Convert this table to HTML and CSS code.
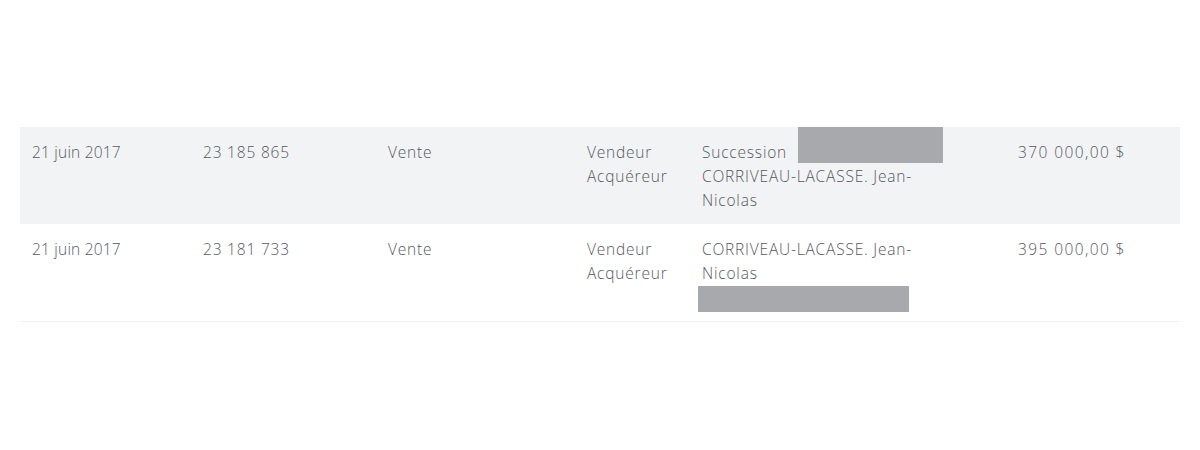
FILE: index.html
```html
<!DOCTYPE html>
<html lang="fr">
<head>
<meta charset="utf-8">
<title>Transactions</title>
<link rel="stylesheet" href="styles.css">
</head>
<body>
<div class="page">
  <table class="tx">
    <colgroup>
      <col class="c-date"><col class="c-num"><col class="c-type"><col class="c-role"><col class="c-name"><col class="c-amt">
    </colgroup>
    <tbody>
      <tr class="odd">
        <td class="date">21 juin 2017</td>
        <td>23 185 865</td>
        <td>Vente</td>
        <td><div>Vendeur</div><div>Acquéreur</div></td>
        <td>
          <div class="party">Succession <span class="redact r1"></span></div>
          <div class="party">CORRIVEAU-LACASSE. Jean-<br>Nicolas</div>
        </td>
        <td class="amt">370 000,00 $</td>
      </tr>
      <tr class="even">
        <td class="date">21 juin 2017</td>
        <td>23 181 733</td>
        <td>Vente</td>
        <td><div>Vendeur</div><div>Acquéreur</div></td>
        <td>
          <div class="party">CORRIVEAU-LACASSE. Jean-<br>Nicolas</div>
          <div class="redact r2"></div>
        </td>
        <td class="amt">395 000,00 $</td>
      </tr>
    </tbody>
  </table>
</div>
</body>
</html>
```

FILE: styles.css
```css
html, body {
  margin: 0;
  padding: 0;
  background: #ffffff;
}
body {
  font-family: "Open Sans", "Lato", "Liberation Sans", sans-serif;
  font-size: 15.5px;
  font-weight: 300;
  letter-spacing: 0.8px;
  color: #55595d;
}
.page {
  padding: 127px 20px 0 20px;
}
.tx {
  width: 1160px;
  border-collapse: collapse;
  table-layout: fixed;
}
.c-date { width: 171px; }
.c-num { width: 185px; }
.c-type { width: 199px; }
.c-role { width: 115px; }
.c-name { width: 316px; }
.c-amt { width: 174px; }
.tx td {
  vertical-align: top;
  padding: 13px 12px 12px 12px;
  line-height: 24px;
}
.tx td.date {
  letter-spacing: 0.2px;
}
.tx td.amt {
  letter-spacing: 1.4px;
}
.tx tr.odd td {
  background: #f2f3f5;
}
.tx tr.even td {
  border-bottom: 1px solid #eef0f2;
}
.redact {
  background: #a7a9ac;
}
.r1 {
  display: inline-block;
  width: 145px;
  height: 36px;
  vertical-align: top;
  margin-top: -13px;
  margin-left: 6px;
}
.r2 {
  width: 211px;
  height: 26px;
  margin: 1px 0 -3px -4px;
}
```
